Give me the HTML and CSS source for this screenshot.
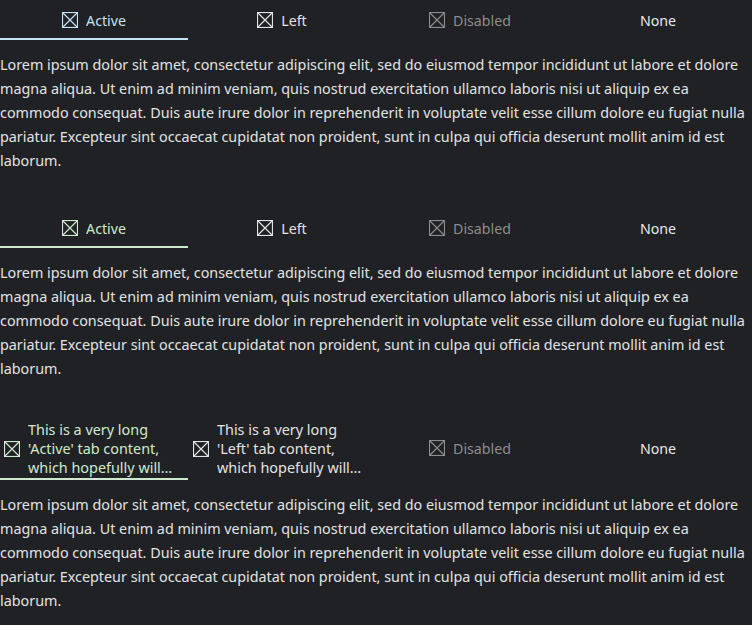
FILE: index.html
```html
<!DOCTYPE html>
<html>
<head>
<meta charset="utf-8">
<link rel="stylesheet" href="styles.css">
</head>
<body>
<div class="page">
  <section class="block">
    <div class="tabs">
      <div class="tab active blue"><svg class="ico" viewBox="0 0 16 16"><rect x="0.5" y="0.5" width="15" height="15"/><path d="M1 1L15 15M15 1L1 15"/></svg><span class="label">Active</span></div>
      <div class="tab"><svg class="ico" viewBox="0 0 16 16"><rect x="0.5" y="0.5" width="15" height="15"/><path d="M1 1L15 15M15 1L1 15"/></svg><span class="label">Left</span></div>
      <div class="tab disabled"><svg class="ico" viewBox="0 0 16 16"><rect x="0.5" y="0.5" width="15" height="15"/><path d="M1 1L15 15M15 1L1 15"/></svg><span class="label">Disabled</span></div>
      <div class="tab none"><span class="label">None</span></div>
    </div>
    <p class="text">Lorem ipsum dolor sit amet, consectetur adipiscing elit, sed do eiusmod tempor incididunt ut labore et dolore magna aliqua. Ut enim ad minim veniam, quis nostrud exercitation ullamco laboris nisi ut aliquip ex ea commodo consequat. Duis aute irure dolor in reprehenderit in voluptate velit esse cillum dolore eu fugiat nulla pariatur. Excepteur sint occaecat cupidatat non proident, sunt in culpa qui officia deserunt mollit anim id est laborum.</p>
  </section>
  <section class="block">
    <div class="tabs">
      <div class="tab active green"><svg class="ico" viewBox="0 0 16 16"><rect x="0.5" y="0.5" width="15" height="15"/><path d="M1 1L15 15M15 1L1 15"/></svg><span class="label">Active</span></div>
      <div class="tab"><svg class="ico" viewBox="0 0 16 16"><rect x="0.5" y="0.5" width="15" height="15"/><path d="M1 1L15 15M15 1L1 15"/></svg><span class="label">Left</span></div>
      <div class="tab disabled"><svg class="ico" viewBox="0 0 16 16"><rect x="0.5" y="0.5" width="15" height="15"/><path d="M1 1L15 15M15 1L1 15"/></svg><span class="label">Disabled</span></div>
      <div class="tab none"><span class="label">None</span></div>
    </div>
    <p class="text">Lorem ipsum dolor sit amet, consectetur adipiscing elit, sed do eiusmod tempor incididunt ut labore et dolore magna aliqua. Ut enim ad minim veniam, quis nostrud exercitation ullamco laboris nisi ut aliquip ex ea commodo consequat. Duis aute irure dolor in reprehenderit in voluptate velit esse cillum dolore eu fugiat nulla pariatur. Excepteur sint occaecat cupidatat non proident, sunt in culpa qui officia deserunt mollit anim id est laborum.</p>
  </section>
  <section class="block">
    <div class="tabs">
      <div class="tab active green long"><svg class="ico" viewBox="0 0 16 16"><rect x="0.5" y="0.5" width="15" height="15"/><path d="M1 1L15 15M15 1L1 15"/></svg><span class="label clamp">This is a very long 'Active' tab content, which hopefully will wrap and get truncated after three lines of text</span></div>
      <div class="tab long"><svg class="ico" viewBox="0 0 16 16"><rect x="0.5" y="0.5" width="15" height="15"/><path d="M1 1L15 15M15 1L1 15"/></svg><span class="label clamp">This is a very long 'Left' tab content, which hopefully will wrap and get truncated after three lines of text</span></div>
      <div class="tab disabled"><svg class="ico" viewBox="0 0 16 16"><rect x="0.5" y="0.5" width="15" height="15"/><path d="M1 1L15 15M15 1L1 15"/></svg><span class="label">Disabled</span></div>
      <div class="tab none"><span class="label">None</span></div>
    </div>
    <p class="text">Lorem ipsum dolor sit amet, consectetur adipiscing elit, sed do eiusmod tempor incididunt ut labore et dolore magna aliqua. Ut enim ad minim veniam, quis nostrud exercitation ullamco laboris nisi ut aliquip ex ea commodo consequat. Duis aute irure dolor in reprehenderit in voluptate velit esse cillum dolore eu fugiat nulla pariatur. Excepteur sint occaecat cupidatat non proident, sunt in culpa qui officia deserunt mollit anim id est laborum.</p>
  </section>
</div>
</body>
</html>
```

FILE: styles.css
```css
html, body {
  margin: 0;
  padding: 0;
  background: #202124;
}
body {
  font-family: "Noto Sans", "Open Sans", sans-serif;
  font-size: 14px;
  color: #e3e3e3;
}
.page {
  display: flex;
  flex-direction: column;
  gap: 35px;
}
.tabs {
  display: flex;
}
.tab {
  flex: 0 0 25%;
  min-width: 0;
  min-height: 40px;
  box-sizing: border-box;
  padding: 4px;
  display: flex;
  align-items: center;
  justify-content: center;
  gap: 8px;
  color: #e3e3e3;
}
.ico {
  width: 16px;
  height: 16px;
  flex: none;
  fill: none;
  stroke: currentColor;
  stroke-width: 1.2;
}
.label {
  font-size: 14.2px;
  line-height: normal;
}
.clamp {
  flex: 1 1 auto;
  min-width: 0;
  display: -webkit-box;
  -webkit-line-clamp: 3;
  -webkit-box-orient: vertical;
  overflow: hidden;
  font-size: 14.4px;
  line-height: 19px;
}
.tab.long {
  justify-content: flex-start;
  padding: 4px 10px 3px 4px;
}
.tab.long + .tab.long {
  padding-left: 5px;
}
.tab.active.blue {
  color: #c6e2f5;
  box-shadow: inset 0 -2px 0 #c6e2f5;
}
.tab.active.green {
  color: #cfe9cf;
  box-shadow: inset 0 -2px 0 #cfe9cf;
}
.tab.disabled {
  color: #8c8c8c;
}
.tab.none {
  color: #e8e8e8;
}
.text {
  margin: 13px 0 0;
  font-size: 14.35px;
  line-height: 24px;
  color: #e3e3e3;
}
```
